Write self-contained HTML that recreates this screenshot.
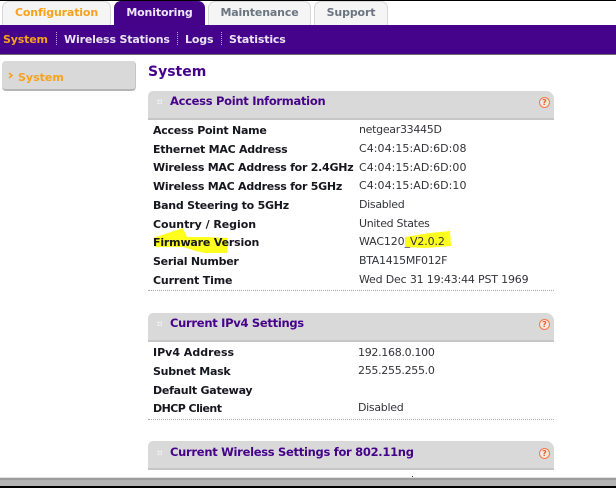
<!DOCTYPE html>
<html><head><meta charset="utf-8"><style>
html,body{margin:0;padding:0;background:#fff}
#p{position:relative;width:616px;height:488px;overflow:hidden;background:#fff;font-family:"DejaVu Sans","Liberation Sans",sans-serif;font-size:11px}
#p div{position:absolute;white-space:nowrap}
.tab{top:1px;height:24px;background:#f5f5f5;border:1px solid #d8d8d8;border-bottom:none;border-radius:7px 7px 0 0;box-sizing:border-box;text-align:center;font-weight:bold;font-size:11px;letter-spacing:-.15px;line-height:22px;color:#6b7580}
.n{top:33px;font-weight:bold;font-size:11px;letter-spacing:-.16px;line-height:14px;color:#e8e4f4}
.sep{top:32px;height:13px;width:0;border-left:1px dotted #b9a8d0}
.bar{left:148px;width:406px;height:27px;background:#d9d9d9;border-bottom:2px solid #c6c6c6;border-radius:5px 8px 0 0;box-sizing:content-box}
.t{left:170px;margin-top:1px;font-weight:bold;font-size:11.5px;letter-spacing:-.29px;line-height:16px;color:#45038a}
.dots{left:157px;width:5px;height:5px;background:radial-gradient(circle,#f4f4f4 1px,transparent 1.2px) 0 0/3px 3px}
.q{left:539px;width:9px;height:9px;border:1px solid #f47a45;border-radius:50%;background:#f7e8df;color:#e8622a;font-size:8px;font-weight:bold;line-height:9px;text-align:center}
.l{left:153px;margin-top:1px;font-weight:bold;font-size:11px;letter-spacing:-.25px;line-height:14px;color:#16161f}
.v{left:359px;margin-top:1px;font-size:11px;letter-spacing:-.3px;line-height:14px;color:#33343a}
.c{letter-spacing:.05px}
.v2{left:358px}
.d{left:148px;width:406px;height:0;border-top:1px dotted #aaa}
</style></head><body><div id="p">
<div style="left:0;top:0;width:616px;height:1px;background:#000"></div>
<div class="tab" style="left:2px;width:109px;color:#f6a21c">Configuration</div>
<div class="tab" style="left:114px;width:91px;top:1px;background:#45038a;border-color:#45038a;color:#eee8f6">Monitoring</div>
<div class="tab" style="left:208px;width:103px">Maintenance</div>
<div class="tab" style="left:314px;width:74px">Support</div>
<div style="left:0;top:25px;width:616px;height:29px;background:#45028a;border-bottom:1px solid #6c6c6c"></div>
<div class="n" style="left:3px;color:#f6a21c">System</div>
<div class="sep" style="left:56px"></div>
<div class="n" style="left:64px">Wireless Stations</div>
<div class="sep" style="left:177px"></div>
<div class="n" style="left:185px">Logs</div>
<div class="sep" style="left:221px"></div>
<div class="n" style="left:229px">Statistics</div>

<div style="left:2px;top:61px;width:134px;height:30px;box-sizing:border-box;background:#d9d9d9;border-bottom:2px solid #b5b5b5;border-right:1px solid #c4c4c4;border-radius:4px"></div>
<svg style="position:absolute;left:8px;top:72px" width="6" height="8"><path d="M1 1 L4 3.5 L1 6" fill="none" stroke="#f6a21c" stroke-width="1.6"/></svg>
<div style="left:18px;top:71px;color:#f6a21c;font-weight:bold;font-size:11px;line-height:14px">System</div>
<div style="left:148px;top:63px;color:#45038a;font-weight:bold;font-size:14px;line-height:18px">System</div>

<div class="bar" style="top:91px"></div><div class="dots" style="top:99px"></div>
<div class="t" style="top:92px">Access Point Information</div><div class="q" style="top:97px">?</div>

<div class="l" style="top:123px">Access Point Name</div><div class="v" style="top:122px">netgear33445D</div>
<div class="l" style="top:142px">Ethernet MAC Address</div><div class="v c" style="top:141px">C4:04:15:AD:6D:08</div>
<div class="l" style="top:160px">Wireless MAC Address for 2.4GHz</div><div class="v c" style="top:160px">C4:04:15:AD:6D:00</div>
<div class="l" style="top:179px">Wireless MAC Address for 5GHz</div><div class="v c" style="top:178px">C4:04:15:AD:6D:10</div>
<div class="l" style="top:198px">Band Steering to 5GHz</div><div class="v" style="top:197px">Disabled</div>
<div class="l" style="top:217px;letter-spacing:-.05px">Country / Region</div><div class="v" style="top:216px">United States</div>

<svg style="position:absolute;left:0;top:0" width="616" height="488"><path d="M153 238 L168 233 L183 228 L187 237 L205 237 L227 238 L227 253 L205 253 L196 251 L183 247 L170 247 L155 247 Z" fill="#ffff1e"/><path d="M405 237 L430 233 L450 231 L451 246 L425 248 L405 247 Z" fill="#ffff1e"/></svg>

<div class="l" style="top:235px;letter-spacing:-.18px">Firmware Version</div><div class="v" style="top:234px;letter-spacing:-.12px">WAC120_V2.0.2</div>
<div class="l" style="top:254px">Serial Number</div><div class="v" style="top:253px">BTA1415MF012F</div>
<div class="l" style="top:273px;letter-spacing:-.17px">Current Time</div><div class="v" style="top:272px;letter-spacing:-.18px">Wed Dec 31 19:43:44 PST 1969</div>
<div class="d" style="top:290px"></div>

<div class="bar" style="top:313px"></div><div class="dots" style="top:321px"></div>
<div class="t" style="top:314px">Current IPv4 Settings</div><div class="q" style="top:319px">?</div>
<div class="l" style="top:345px;letter-spacing:0">IPv4 Address</div><div class="v v2" style="top:345px">192.168.0.100</div>
<div class="l" style="top:364px">Subnet Mask</div><div class="v v2" style="top:363px">255.255.255.0</div>
<div class="l" style="top:383px">Default Gateway</div>
<div class="l" style="top:401px;letter-spacing:-.55px">DHCP Client</div><div class="v v2" style="top:400px">Disabled</div>
<div class="d" style="top:419px"></div>

<div class="bar" style="top:441px"></div><div class="dots" style="top:450px"></div>
<div class="t" style="top:443px">Current Wireless Settings for 802.11ng</div><div class="q" style="top:448px">?</div>
<div style="left:412px;top:476px;width:1px;height:1px;background:#45038a"></div>

<div style="left:0;top:477px;width:616px;height:1px;background:#e2e2e2"></div>
<div style="left:0;top:478px;width:616px;height:2px;background:#9c9c9c"></div>
<div style="left:0;top:480px;width:616px;height:6px;background:#b4b4b4"></div>
<div style="left:0;top:486px;width:616px;height:2px;background:#000"></div>
</div></body></html>
